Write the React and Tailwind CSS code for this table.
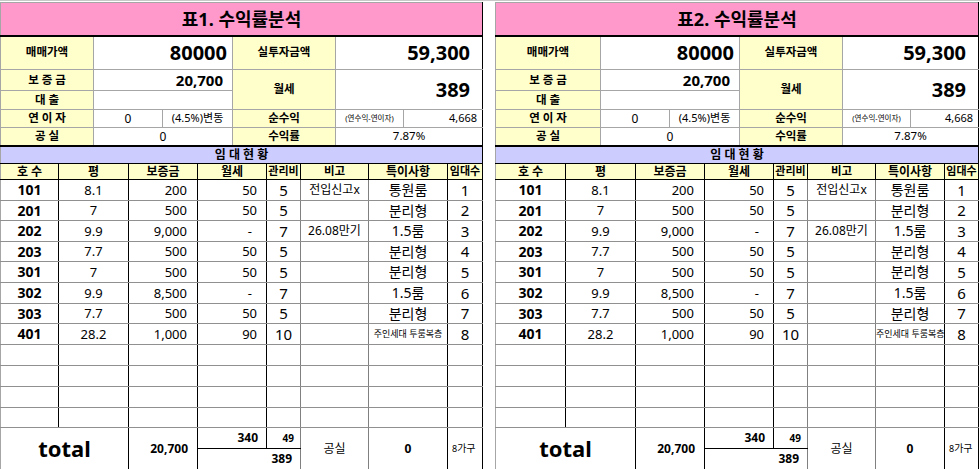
import React from 'react';

const rows = [
  ['101', '8.1', '200', '50', '5', '전입신고x', '통원룸', '1'],
  ['201', '7', '500', '50', '5', '', '분리형', '2'],
  ['202', '9.9', '9,000', '-', '7', '26.08만기', '1.5룸', '3'],
  ['203', '7.7', '500', '50', '5', '', '분리형', '4'],
  ['301', '7', '500', '50', '5', '', '분리형', '5'],
  ['302', '9.9', '8,500', '-', '7', '', '1.5룸', '6'],
  ['303', '7.7', '500', '50', '5', '', '분리형', '7'],
  ['401', '28.2', '1,000', '90', '10', '', '주인세대 투룸복층', '8'],
];
const rowH = ['h-[21px]', 'h-[20px]', 'h-[21px]', 'h-[20px]', 'h-[21px]', 'h-[21px]', 'h-[20px]', 'h-[21px]'];
const emptyH = ['h-[21px]', 'h-[21px]', 'h-[21px]', 'h-[20px]'];

const headers = ['호 수', '평', '보증금', '월세', '관리비', '비고', '특이사항', '임대수'];

// column widths of the two sheets differ a little
const layouts = {
  left: {
    width: 'w-[482px]',
    top: ['w-[93px]', 'w-[69px]', 'w-[70px]', 'w-[103px]', 'w-[68px]', 'w-[79px]'],
    bottom: ['w-[58px]', 'w-[70px]', 'w-[69px]', 'w-[69px]', 'w-[34px]', 'w-[68px]', 'w-[79px]', 'w-[35px]'],
  },
  right: {
    width: 'w-[483px]',
    top: ['w-[105px]', 'w-[69px]', 'w-[70px]', 'w-[103px]', 'w-[68px]', 'w-[68px]'],
    bottom: ['w-[70px]', 'w-[70px]', 'w-[69px]', 'w-[69px]', 'w-[34px]', 'w-[68px]', 'w-[69px]', 'w-[34px]'],
  },
};

// per-column cell styles for the 임대현황 rows
const colCls = [
  'text-center font-bold text-[14px]',
  'text-center text-[13px]',
  'text-right pr-[10px] text-[13px]',
  'text-right pr-[9px] text-[13px]',
  'text-center text-[15px] border-r-[#808080]',
  'text-center text-[12px] border-l-[#808080] border-r-[#808080]',
  'text-center text-[14px] border-l-[#808080]',
  'text-center text-[15px]',
];

const cellBase = 'border border-black border-t-[#909090] border-b-[#909090] whitespace-nowrap overflow-hidden';
const topLabel = 'bg-[#ffffcc] border border-[#a6a6a6] text-center font-semibold text-[11.5px]';
const topVal = 'bg-white border border-[#a6a6a6]';

function Panel({ title, layout }) {
  const { width, top, bottom } = layouts[layout];
  return (
    <div className={`${width} shrink-0 flex flex-col`}>
      {/* 수익률 요약 */}
      <table className={`${width} table-fixed border-collapse leading-[1.1]`}>
        <colgroup>
          {top.map((w, i) => <col key={i} className={w} />)}
        </colgroup>
        <tbody>
          <tr className="h-[33px]">
            <td colSpan={6} className="bg-[#ff99cc] border border-[#a6a6a6] border-r-black border-b-2 border-b-black text-center text-[18px] font-bold pt-[2px]">
              {title}
            </td>
          </tr>
          <tr className="h-[34px]">
            <td className={topLabel}>매매가액</td>
            <td colSpan={2} className={`${topVal} text-right pr-[5px] text-[20px] font-bold`}>80000</td>
            <td className={topLabel}>실투자금액</td>
            <td colSpan={2} className={`${topVal} border-r-black text-right pr-[12px] text-[20px] font-bold`}>59,300</td>
          </tr>
          <tr className="h-[21px]">
            <td className={topLabel}>보 증 금</td>
            <td colSpan={2} className={`${topVal} text-right pr-[9px] text-[15px] font-bold`}>20,700</td>
            <td rowSpan={2} className={topLabel}>월세</td>
            <td colSpan={2} rowSpan={2} className={`${topVal} border-r-black text-right pr-[12px] text-[20px] font-bold`}>389</td>
          </tr>
          <tr className="h-[19px]">
            <td className={topLabel}>대 출</td>
            <td colSpan={2} className={topVal}></td>
          </tr>
          <tr className="h-[18px]">
            <td className={topLabel}>연 이 자</td>
            <td className={`${topVal} text-center text-[12px]`}>0</td>
            <td className={`${topVal} text-center text-[11px] whitespace-nowrap`}>(4.5%)변동</td>
            <td className={topLabel}>순수익</td>
            <td className={`${topVal} text-center text-[7.5px] whitespace-nowrap`}>(연수익-연이자)</td>
            <td className={`${topVal} border-r-black text-right pr-[5px] text-[11px]`}>4,668</td>
          </tr>
          <tr className="h-[17px]">
            <td className={`${topLabel} border-b-0`}>공 실</td>
            <td colSpan={2} className={`${topVal} border-b-0 text-center text-[12px]`}>0</td>
            <td className={`${topLabel} border-b-0`}>수익률</td>
            <td colSpan={2} className={`${topVal} border-b-0 border-r-black text-center text-[11.5px]`}>7.87%</td>
          </tr>
        </tbody>
      </table>

      {/* 임대현황 */}
      <table className={`${width} table-fixed border-collapse leading-[1.1]`}>
        <colgroup>
          {bottom.map((w, i) => <col key={i} className={w} />)}
        </colgroup>
        <tbody>
          <tr className="h-[18px]">
            <td colSpan={8} className="bg-[#ccccff] border border-black border-l-[#a6a6a6] border-t-2 text-center text-[12px] font-semibold">
              임 대 현 황
            </td>
          </tr>
          <tr className="h-[16px]">
            {headers.map((h, i) => (
              <td
                key={h}
                className={`bg-[#ffffcc] border border-black text-center font-semibold whitespace-nowrap overflow-hidden ${
                  i === 4 || i === 7 ? 'text-[11px]' : i === 5 ? 'text-[11.5px]' : 'text-[12px]'
                } ${i === 0 ? 'border-l-[#a6a6a6]' : ''}`}
              >
                {h}
              </td>
            ))}
          </tr>
          {rows.map((r, ri) => (
            <tr key={r[0]} className={rowH[ri]}>
              {r.map((v, ci) => {
                let extra = colCls[ci];
                if (ci === 3 && v === '-') extra = 'text-right pr-[14px] text-[13px]';
                if (ci === 6 && v.length > 6) extra = 'text-center text-[9px] border-l-[#808080] text-clip';
                return (
                  <td key={ci} className={`${cellBase} ${extra} ${ci === 0 ? 'border-l-[#a6a6a6]' : ''}`}>
                    {v}
                  </td>
                );
              })}
            </tr>
          ))}
          {emptyH.map((h, ri) => (
            <tr key={'e' + ri} className={h}>
              {colCls.map((c, ci) => (
                <td key={ci} className={`${cellBase} ${c} ${ci === 0 ? 'border-l-[#a6a6a6]' : ''}`}></td>
              ))}
            </tr>
          ))}
          <tr className="h-[21px]">
            <td colSpan={2} rowSpan={2} className="border border-black border-l-[#a6a6a6] border-b-2 text-center text-[22px] font-bold">
              total
            </td>
            <td rowSpan={2} className="border border-black border-b-2 text-right pr-[9px] text-[12px] font-bold">20,700</td>
            <td className="border border-black text-right pr-[8px] text-[12px] font-bold">340</td>
            <td className="border border-black border-r-[#808080] text-right pr-[6px] text-[10px] font-bold">49</td>
            <td rowSpan={2} className="border border-[#808080] border-b-2 border-b-black text-center text-[12px]">공실</td>
            <td rowSpan={2} className="border border-black border-l-[#808080] border-b-2 text-center text-[12px] font-bold">0</td>
            <td rowSpan={2} className="border border-black border-b-2 text-left pl-[4px] text-[10px] whitespace-nowrap">
              <span className="text-[9px]">8</span>가구
            </td>
          </tr>
          <tr className="h-[21px]">
            <td colSpan={2} className="border border-black border-r-[#808080] border-b-2 text-right pr-[8px] text-[12px] font-bold">389</td>
          </tr>
        </tbody>
      </table>
    </div>
  );
}

export default function App() {
  return (
    <div className="w-[980px] h-[469px] overflow-hidden bg-white text-black flex pt-px border-t border-[#c8c8c8] font-['Noto_Sans','Noto_Sans_CJK_KR',sans-serif]">
      <Panel title="표1. 수익률분석" layout="left" />
      <div className="w-[13px] shrink-0" />
      <Panel title="표2. 수익률분석" layout="right" />
    </div>
  );
}
